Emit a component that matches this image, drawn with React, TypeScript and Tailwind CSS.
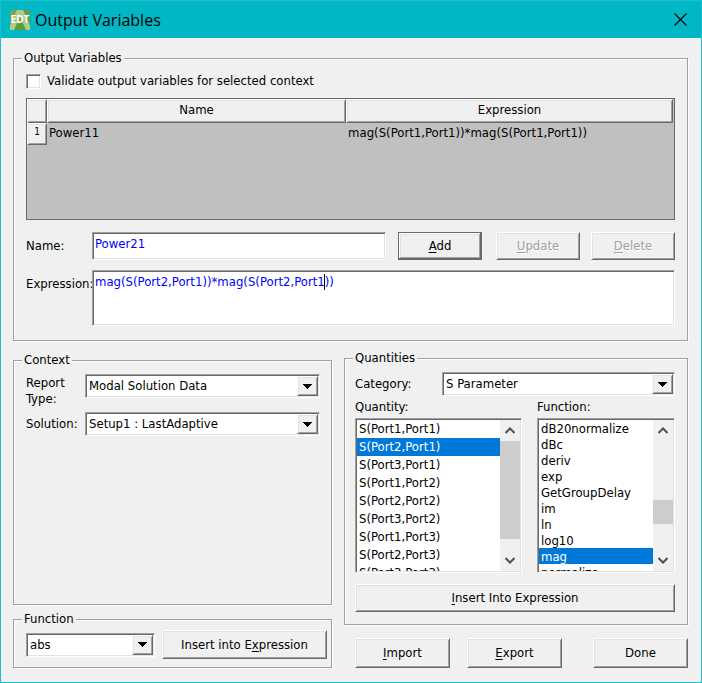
import React, { useState } from 'react';

const FIELD =
  'border border-t-[#a0a0a0] border-l-[#a0a0a0] border-r-white border-b-white shadow-[inset_1px_1px_0_#696969,inset_-1px_-1px_0_#e3e3e3] bg-white rounded-none outline-none';
const RAISED =
  'border border-t-white border-l-white border-r-[#696969] border-b-[#696969] shadow-[inset_1px_1px_0_#e3e3e3,inset_-1px_-1px_0_#a0a0a0] bg-[#f0f0f0]';
const RAISED_DEFAULT =
  'border border-[#696969] shadow-[inset_-1px_-1px_0_#696969,inset_1px_1px_0_#fff,inset_-2px_-2px_0_#a0a0a0,inset_2px_2px_0_#e3e3e3] bg-[#f0f0f0]';

const quantities = [
  'S(Port1,Port1)',
  'S(Port2,Port1)',
  'S(Port3,Port1)',
  'S(Port1,Port2)',
  'S(Port2,Port2)',
  'S(Port3,Port2)',
  'S(Port1,Port3)',
  'S(Port2,Port3)',
  'S(Port3,Port3)',
];

const functions = ['dB20normalize', 'dBc', 'deriv', 'exp', 'GetGroupDelay', 'im', 'ln', 'log10', 'mag', 'normalize'];

interface GroupProps {
  title: string;
  className?: string;
  bodyClass: string;
  children: React.ReactNode;
}

const Group: React.FC<GroupProps> = ({ title, className = '', bodyClass, children }) => (
  <fieldset className={`min-w-0 border border-[#a0a0a0] shadow-[1px_1px_0_#fff,inset_1px_1px_0_#fff] ${className}`}>
    <legend className="ml-2 bg-[#f0f0f0] px-0.5">{title}</legend>
    <div className={bodyClass}>{children}</div>
  </fieldset>
);

interface ButtonProps {
  label: string;
  hotkey?: number;
  isDefault?: boolean;
  disabled?: boolean;
  className?: string;
}

const Button: React.FC<ButtonProps> = ({ label, hotkey, isDefault, disabled, className = '' }) => (
  <button
    type="button"
    disabled={disabled}
    className={`${isDefault ? RAISED_DEFAULT : RAISED} disabled:text-[#a0a0a0] disabled:[text-shadow:1px_1px_0_#fff] ${className}`}
  >
    {hotkey === undefined ? (
      label
    ) : (
      <>
        {label.slice(0, hotkey)}
        <span className="underline underline-offset-2">{label[hotkey]}</span>
        {label.slice(hotkey + 1)}
      </>
    )}
  </button>
);

interface DropdownProps {
  id: string;
  value: string;
  ariaLabel?: string;
}

const Dropdown: React.FC<DropdownProps> = ({ id, value, ariaLabel }) => (
  <div className="relative min-w-0 flex-1">
    <select id={id} aria-label={ariaLabel} className={`block h-6 w-full appearance-none pl-[3px] ${FIELD}`}>
      <option>{value}</option>
    </select>
    <span className={`pointer-events-none absolute top-0.5 right-0.5 bottom-0.5 flex w-[21px] items-center justify-center ${RAISED}`}>
      <svg width="9" height="5" viewBox="0 0 9 5" shapeRendering="crispEdges">
        <path d="M0 0h9v1h-1v1h-1v1h-1v1h-1v1h-1v-1h-1v-1h-1v-1h-1v-1h-1z" />
      </svg>
    </span>
  </div>
);

const Chevron = ({ down }: { down?: boolean }) => (
  <svg width="10" height="7" viewBox="0 0 10 7" fill="none" stroke="#505050" strokeWidth="2" className={down ? 'rotate-180' : ''}>
    <path d="M0.5 6L5 1.5L9.5 6" />
  </svg>
);

interface ListBoxProps {
  id: string;
  items: string[];
  initial: string;
  itemClass: string;
  before: string;
  thumb: string;
}

const ListBox: React.FC<ListBoxProps> = ({ id, items, initial, itemClass, before, thumb }) => {
  const [value, setValue] = useState(initial);
  return (
    <div className={`flex h-[155px] p-px ${FIELD}`}>
      <select
        id={id}
        size={9}
        value={value}
        onChange={(e) => setValue(e.target.value)}
        className="h-full min-w-0 flex-1 appearance-none overflow-hidden border-0 bg-transparent p-0 outline-none"
      >
        {items.map((item) => (
          <option
            key={item}
            className={`px-0.5 pt-px pb-0 text-black checked:bg-[linear-gradient(#0078d7,#0078d7)] checked:text-white checked:[-webkit-text-fill-color:#fff] ${itemClass}`}
          >
            {item}
          </option>
        ))}
      </select>
      <div className="flex w-5 flex-col items-center bg-[#f0f0f0]">
        <span className="flex h-[21px] items-center"><Chevron /></span>
        <span className={before} />
        <span className={`w-full bg-[#cdcdcd] ${thumb}`} />
        <span className="flex-1" />
        <span className="flex h-[21px] items-center"><Chevron down /></span>
      </div>
    </div>
  );
};

const TH = `${RAISED} h-6 px-0 pt-0 pb-0.5 font-normal leading-4`;

export default function App() {
  const [name, setName] = useState('Power21');
  const [expression, setExpression] = useState('mag(S(Port2,Port1))*mag(S(Port2,Port1))');

  return (
    <div className="min-h-screen border border-[#1fbccb] bg-[#f0f0f0] font-['DejaVu_Sans_Condensed','DejaVu_Sans',sans-serif] text-[13px] leading-4 text-black">
      <header className="flex h-[37px] items-center bg-[#00b7c6] pr-3.5 pl-[9px]">
        <svg width="20" height="20" viewBox="0 0 20 20">
          <rect width="20" height="20" fill="#8fbd6b" />
          <path d="M0 0h7L0 16z" fill="#6fa657" />
          <path d="M13 0h7v16z" fill="#5f9f50" />
          <path d="M7 0h6l7 16v4h-4L10 7 4 20H0v-4z" fill="#a9cf86" />
          <path d="M10 7l6 13H4z" fill="#5f9a3f" />
          <text x="10" y="13" textAnchor="middle" fontSize="10" fontWeight="bold" fill="#fff" fontFamily="Open Sans, sans-serif">EDT</text>
        </svg>
        <h1 className="ml-[5px] flex-1 font-['Open_Sans',sans-serif] text-[16px] leading-6">Output Variables</h1>
        <button type="button" aria-label="Close">
          <svg width="13" height="13" viewBox="0 0 13 13" stroke="#000" strokeWidth="1.1">
            <path d="M0.5 0.5l12 12M12.5 0.5l-12 12" />
          </svg>
        </button>
      </header>

      <main className="pt-3 pr-[13px] pb-[14px] pl-3">
        <Group title="Output Variables" bodyClass="px-3 pt-[7px] pb-[14px]">
          <label className="flex h-4 items-center gap-1.5">
            <input type="checkbox" className={`h-[15px] w-[15px] appearance-none ${FIELD}`} />
            Validate output variables for selected context
          </label>

          <div className="mt-[9px] h-[122px] border border-[#696969] bg-[#c0c0c0] pr-px">
            <table className="w-full table-fixed border-separate border-spacing-0">
              <colgroup>
                <col className="w-5" />
                <col className="w-[46.3%]" />
                <col />
              </colgroup>
              <thead>
                <tr>
                  <th className={TH} />
                  <th className={TH}>Name</th>
                  <th className={TH}>Expression</th>
                </tr>
              </thead>
              <tbody>
                <tr>
                  <th className={`${RAISED} h-[22px] p-0 align-top text-[10px] leading-4 font-normal`}>1</th>
                  <td className="px-0.5 pt-0.5 pb-0 align-top">Power11</td>
                  <td className="px-0.5 pt-0.5 pb-0 align-top">mag(S(Port1,Port1))*mag(S(Port1,Port1))</td>
                </tr>
              </tbody>
            </table>
          </div>

          <div className="mt-3 flex h-7 items-center">
            <label htmlFor="name" className="w-[66px]">Name:</label>
            <input
              id="name"
              value={name}
              onChange={(e) => setName(e.target.value)}
              className={`h-7 min-w-0 flex-1 pb-1.5 pl-0.5 text-[#0000ff] ${FIELD}`}
            />
            <Button label="Add" hotkey={0} isDefault className="ml-3 h-7 w-[84px]" />
            <Button label="Update" hotkey={0} disabled className="ml-[14px] h-7 w-[84px]" />
            <Button label="Delete" hotkey={0} disabled className="ml-[11px] h-7 w-[84px]" />
          </div>

          <div className="mt-2.5 flex">
            <label htmlFor="expression" className="w-[66px] pt-1.5">Expression:</label>
            <div className="relative flex-1">
              <textarea
                id="expression"
                value={expression}
                onChange={(e) => setExpression(e.target.value)}
                className={`block h-14 w-full resize-none px-0.5 pt-[3px] text-[#0000ff] ${FIELD}`}
              />
              <span className="absolute top-1 left-[232px] h-4 w-px bg-black" />
            </div>
          </div>
        </Group>

        <div className="grid grid-cols-[319fr_344fr] gap-3 pt-[9px]">
          <div className="flex flex-col pt-0.5">
            <Group title="Context" className="flex-1" bodyClass="pt-1.5 pr-[11px] pl-3">
              <div className="flex items-start">
                <label htmlFor="report" className="w-[59px] pt-px pr-2">Report Type:</label>
                <Dropdown id="report" value="Modal Solution Data" />
              </div>
              <div className="mt-[5px] flex items-center">
                <label htmlFor="solution" className="w-[59px]">Solution:</label>
                <Dropdown id="solution" value="Setup1 : LastAdaptive" />
              </div>
            </Group>
            <Group title="Function" className="mt-1.5" bodyClass="flex items-center gap-[7px] pt-[3px] pr-1 pb-2 pl-3">
              <Dropdown id="fn" value="abs" ariaLabel="Function" />
              <Button label="Insert into Expression" hotkey={13} className="h-[29px] w-[165px]" />
            </Group>
          </div>

          <div>
            <Group title="Quantities" bodyClass="pt-1.5 pr-3 pb-3 pl-2.5">
              <div className="flex items-center">
                <label htmlFor="category" className="w-[87px]">Category:</label>
                <Dropdown id="category" value="S Parameter" />
              </div>
              <div className="mt-[3px] grid grid-cols-[167fr_138fr] gap-[15px]">
                <div>
                  <label htmlFor="quantity" className="mb-[3px] block">Quantity:</label>
                  <ListBox
                    id="quantity"
                    items={quantities}
                    initial="S(Port2,Port1)"
                    itemClass="h-[18px] min-h-0 leading-[18px]"
                    before="h-0"
                    thumb="h-[98px]"
                  />
                </div>
                <div>
                  <label htmlFor="function" className="mb-[3px] block">Function:</label>
                  <ListBox
                    id="function"
                    items={functions}
                    initial="mag"
                    itemClass="h-4 min-h-0 leading-4"
                    before="h-[59px]"
                    thumb="h-6"
                  />
                </div>
              </div>
              <Button label="Insert Into Expression" hotkey={0} className="mt-[11px] h-7 w-full" />
            </Group>
            <div className="mt-[13px] flex gap-[17px] pl-[11px]">
              <Button label="Import" hotkey={0} className="h-[30px] w-[95px]" />
              <Button label="Export" hotkey={0} className="h-[30px] w-[95px]" />
              <Button label="Done" className="ml-auto h-[30px] w-[95px]" />
            </div>
          </div>
        </div>
      </main>
    </div>
  );
}
